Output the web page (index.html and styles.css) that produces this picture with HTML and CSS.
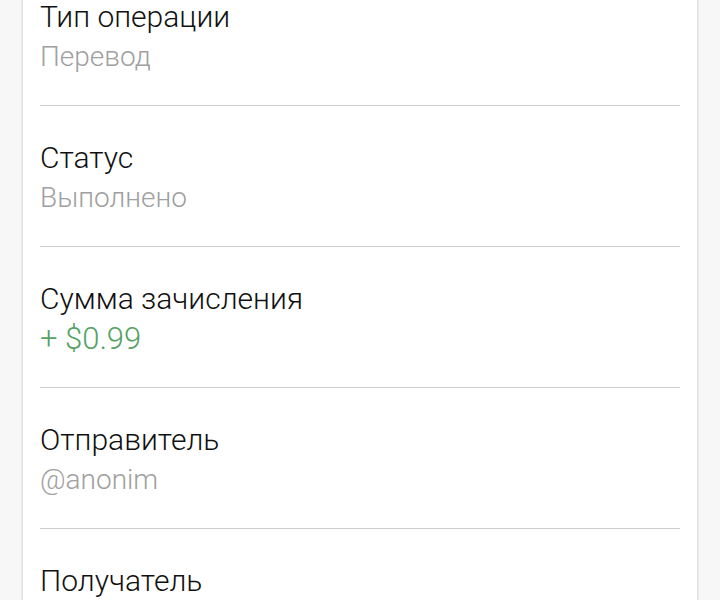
FILE: index.html
```html
<!DOCTYPE html>
<html lang="ru">
<head>
<meta charset="utf-8">
<link rel="stylesheet" href="styles.css">
</head>
<body>
<div class="card">
  <div class="row">
    <div class="label">Тип операции</div>
    <div class="value">Перевод</div>
  </div>
  <div class="row">
    <div class="label">Статус</div>
    <div class="value">Выполнено</div>
  </div>
  <div class="row">
    <div class="label">Сумма зачисления</div>
    <div class="value green">+ $0.99</div>
  </div>
  <div class="row">
    <div class="label">Отправитель</div>
    <div class="value">@anonim</div>
  </div>
  <div class="row">
    <div class="label">Получатель</div>
    <div class="value">@user</div>
  </div>
</div>
</body>
</html>
```
FILE: styles.css
```css
html, body {
  margin: 0;
  padding: 0;
  background: #f7f7f7;
  height: 600px;
  overflow: hidden;
}
body {
  font-family: Roboto, "Noto Sans", sans-serif;
}
.card {
  margin: -35px 23px 0 23px;
  background: #ffffff;
  padding: 0 17px;
  box-shadow: 0 0 3px rgba(0, 0, 0, 0.25);
}
.row {
  padding: 32px 0 28px;
  border-bottom: 1px solid #cccccc;
}
.label {
  font-size: 30px;
  line-height: 40px;
  color: #111111;
  font-weight: 300;
}
.value {
  font-size: 28px;
  line-height: 40px;
  color: #a0a0a0;
  font-weight: 300;
}
.value.green {
  font-size: 31px;
  color: #55a264;
}
```
